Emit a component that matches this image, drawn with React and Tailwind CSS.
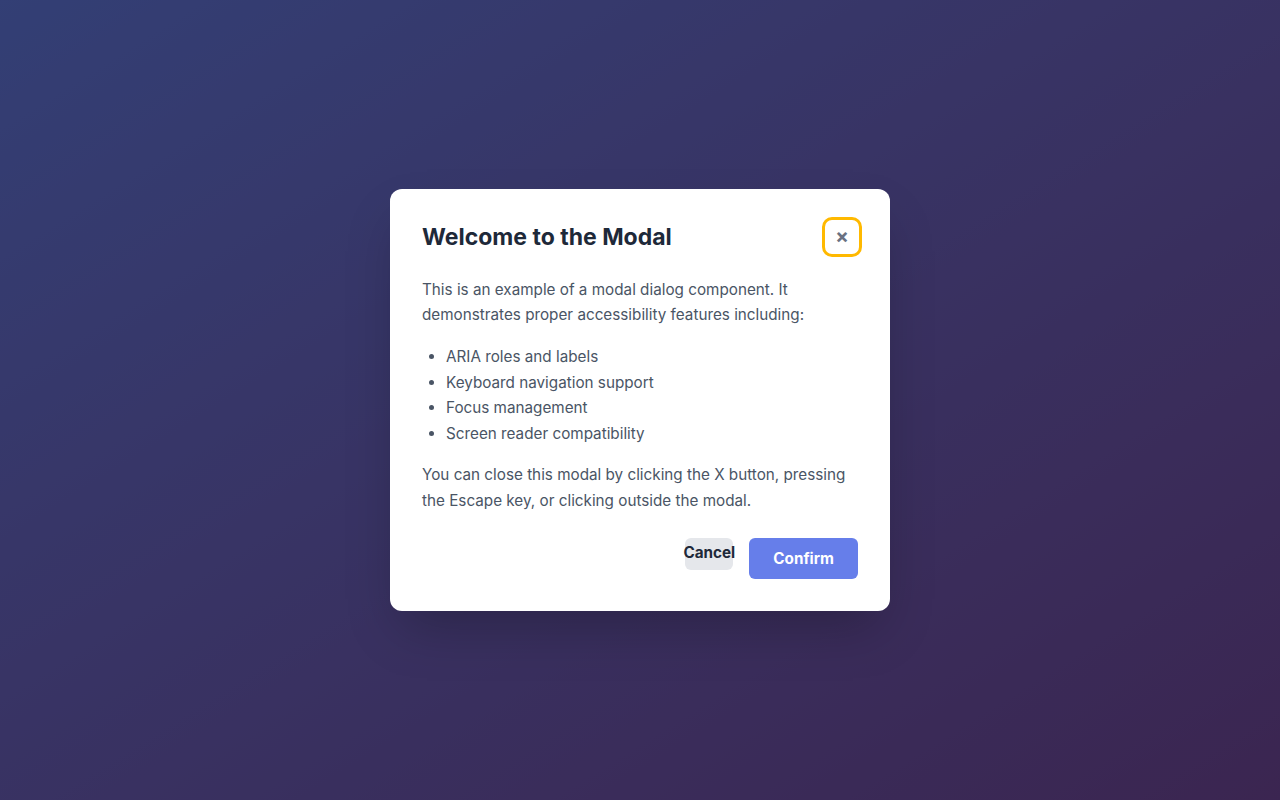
export default function App() {
  return (
    <div
      className="relative min-h-screen w-full bg-gradient-to-br from-[#667eea] to-[#764ba2]"
      style={{ fontFamily: 'Inter, "Noto Sans", sans-serif' }}
    >
      <div className="flex min-h-screen w-full items-center justify-center bg-black/50">
        <div
          role="dialog"
          aria-modal="true"
          aria-labelledby="modal-title"
          className="w-[500px] rounded-xl bg-white p-8 shadow-2xl"
        >
          <div className="mb-6 flex items-center justify-between">
            <h2 id="modal-title" className="text-[23px] font-bold leading-8 text-gray-800">
              Welcome to the Modal
            </h2>
            <button
              type="button"
              aria-label="Close modal"
              className="flex h-8 w-8 items-center justify-center rounded-md pb-px text-xl font-bold leading-none text-gray-500 outline-3 outline-offset-1 outline-amber-400"
            >
              ×
            </button>
          </div>

          <div className="text-[15.25px] leading-[25.6px] text-gray-600">
            <p className="mb-4">
              This is an example of a modal dialog component. It demonstrates proper accessibility
              features including:
            </p>
            <ul className="mb-4 list-disc pl-6">
              <li>ARIA roles and labels</li>
              <li>Keyboard navigation support</li>
              <li>Focus management</li>
              <li>Screen reader compatibility</li>
            </ul>
            <p>
              You can close this modal by clicking the X button, pressing the Escape key, or
              clicking outside the modal.
            </p>
          </div>

          <div className="mt-6 flex items-start justify-end gap-4">
            <button
              type="button"
              className="flex h-8 w-12 items-center justify-center whitespace-nowrap rounded-md bg-gray-200 p-0 text-[15.25px] font-bold text-gray-800"
            >
              Cancel
            </button>
            <button
              type="button"
              className="rounded-md bg-[#667eea] px-6 py-2 text-[15.25px] font-bold leading-[25.6px] text-white"
            >
              Confirm
            </button>
          </div>
        </div>
      </div>
    </div>
  );
}
